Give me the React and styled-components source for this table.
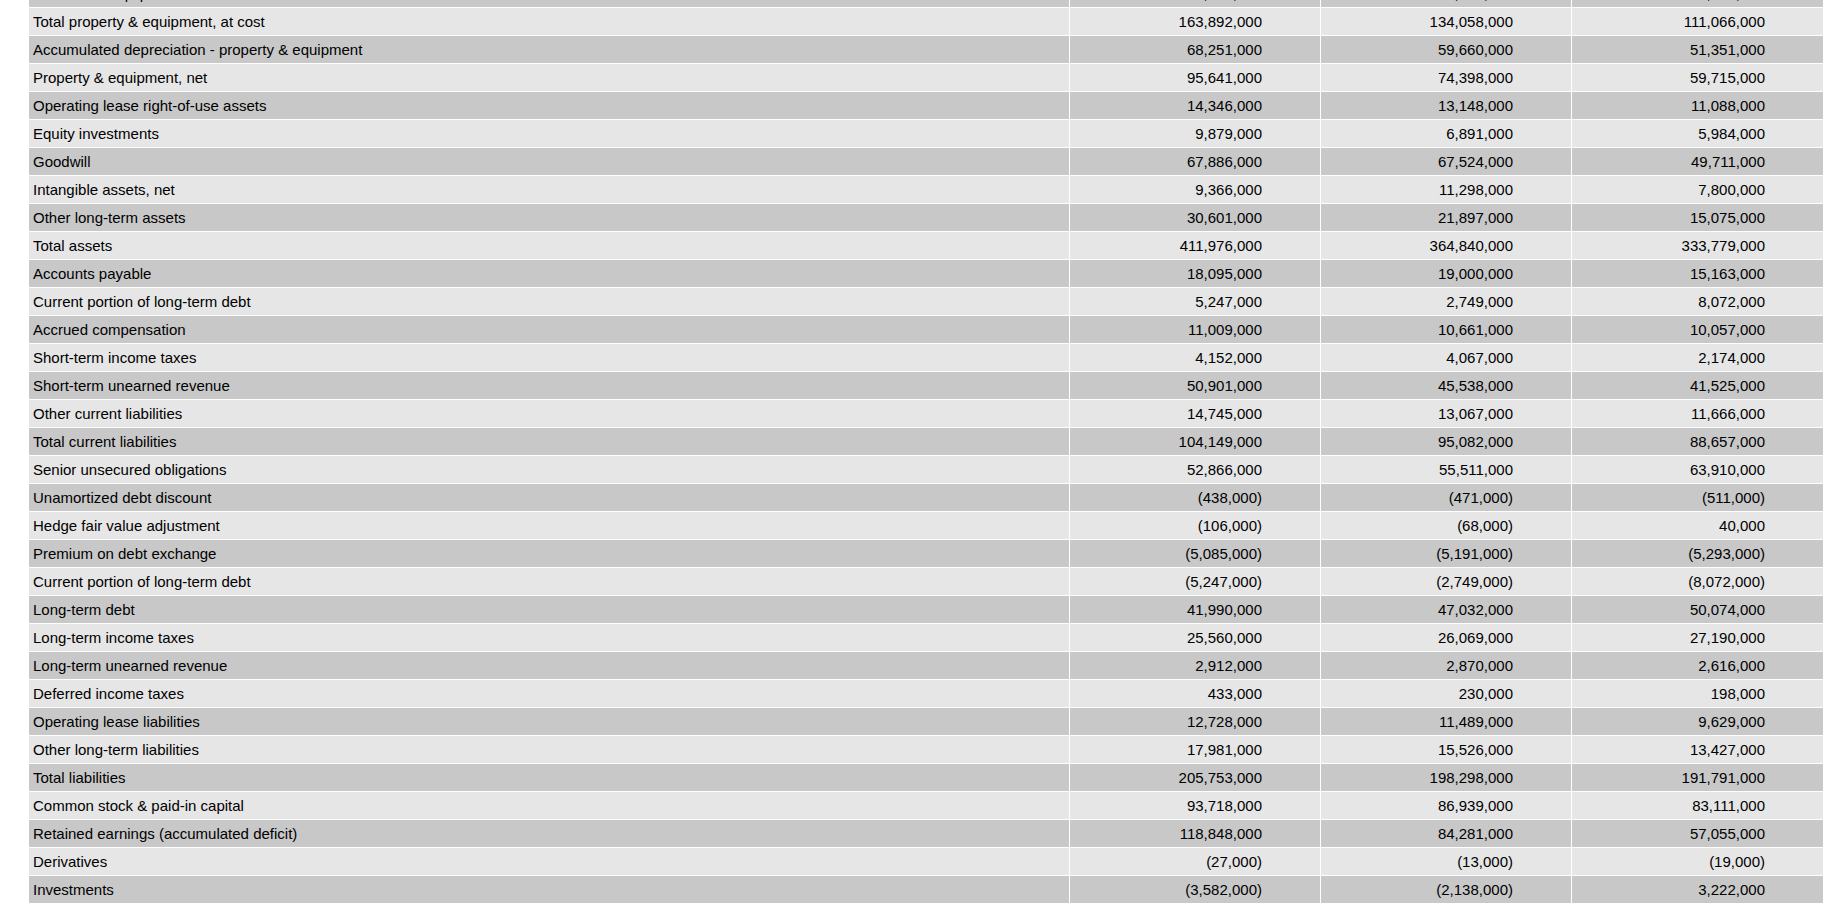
import React from 'react'
import styled, { createGlobalStyle } from 'styled-components'

const GlobalStyle = createGlobalStyle`
  html, body {
    margin: 0;
    padding: 0;
    background: #ffffff;
    overflow: hidden;
  }
  body {
    font-family: "Liberation Sans", Arial, sans-serif;
  }
`

// the page is scrolled a little: the first row is mostly above the fold
const Viewport = styled.div`
  height: 904px;
  overflow: hidden;
  padding-left: 28px;
`

const Sheet = styled.table`
  width: 1796px;
  margin-top: -21px;
  table-layout: fixed;
  border-collapse: separate;
  border-spacing: 1px;
  font-size: 15px;
  color: #000;
`

const Col = styled.col`
  width: ${props => props.$width}px;
`

const Row = styled.tr`
  background-color: ${props => (props.$dark ? '#c8c8c8' : '#e6e6e6')};
`

const LabelCell = styled.td`
  height: 27px;
  padding: 0 4px;
  text-align: left;
  vertical-align: middle;
  white-space: nowrap;
  overflow: hidden;
`

const ValueCell = styled.td`
  height: 27px;
  padding: 0 58px 0 4px;
  text-align: right;
  vertical-align: middle;
  white-space: nowrap;
`

const rows = [
  ['Furniture & equipment', '6,246,000', '5,799,000', '4,969,000'],
  ['Total property & equipment, at cost', '163,892,000', '134,058,000', '111,066,000'],
  ['Accumulated depreciation - property & equipment', '68,251,000', '59,660,000', '51,351,000'],
  ['Property & equipment, net', '95,641,000', '74,398,000', '59,715,000'],
  ['Operating lease right-of-use assets', '14,346,000', '13,148,000', '11,088,000'],
  ['Equity investments', '9,879,000', '6,891,000', '5,984,000'],
  ['Goodwill', '67,886,000', '67,524,000', '49,711,000'],
  ['Intangible assets, net', '9,366,000', '11,298,000', '7,800,000'],
  ['Other long-term assets', '30,601,000', '21,897,000', '15,075,000'],
  ['Total assets', '411,976,000', '364,840,000', '333,779,000'],
  ['Accounts payable', '18,095,000', '19,000,000', '15,163,000'],
  ['Current portion of long-term debt', '5,247,000', '2,749,000', '8,072,000'],
  ['Accrued compensation', '11,009,000', '10,661,000', '10,057,000'],
  ['Short-term income taxes', '4,152,000', '4,067,000', '2,174,000'],
  ['Short-term unearned revenue', '50,901,000', '45,538,000', '41,525,000'],
  ['Other current liabilities', '14,745,000', '13,067,000', '11,666,000'],
  ['Total current liabilities', '104,149,000', '95,082,000', '88,657,000'],
  ['Senior unsecured obligations', '52,866,000', '55,511,000', '63,910,000'],
  ['Unamortized debt discount', '(438,000)', '(471,000)', '(511,000)'],
  ['Hedge fair value adjustment', '(106,000)', '(68,000)', '40,000'],
  ['Premium on debt exchange', '(5,085,000)', '(5,191,000)', '(5,293,000)'],
  ['Current portion of long-term debt', '(5,247,000)', '(2,749,000)', '(8,072,000)'],
  ['Long-term debt', '41,990,000', '47,032,000', '50,074,000'],
  ['Long-term income taxes', '25,560,000', '26,069,000', '27,190,000'],
  ['Long-term unearned revenue', '2,912,000', '2,870,000', '2,616,000'],
  ['Deferred income taxes', '433,000', '230,000', '198,000'],
  ['Operating lease liabilities', '12,728,000', '11,489,000', '9,629,000'],
  ['Other long-term liabilities', '17,981,000', '15,526,000', '13,427,000'],
  ['Total liabilities', '205,753,000', '198,298,000', '191,791,000'],
  ['Common stock & paid-in capital', '93,718,000', '86,939,000', '83,111,000'],
  ['Retained earnings (accumulated deficit)', '118,848,000', '84,281,000', '57,055,000'],
  ['Derivatives', '(27,000)', '(13,000)', '(19,000)'],
  ['Investments', '(3,582,000)', '(2,138,000)', '3,222,000'],
]

const App = () => {
  return (
    <>
      <GlobalStyle />
      <Viewport>
        <Sheet>
          <colgroup>
            <Col $width={1040} />
            <Col $width={250} />
            <Col $width={250} />
            <Col $width={251} />
          </colgroup>
          <tbody>
            {rows.map(([label, ...values], i) => (
              <Row key={i} $dark={i % 2 === 0}>
                <LabelCell>{label}</LabelCell>
                {values.map((v, j) => (
                  <ValueCell key={j}>{v}</ValueCell>
                ))}
              </Row>
            ))}
          </tbody>
        </Sheet>
      </Viewport>
    </>
  )
}

export default App
